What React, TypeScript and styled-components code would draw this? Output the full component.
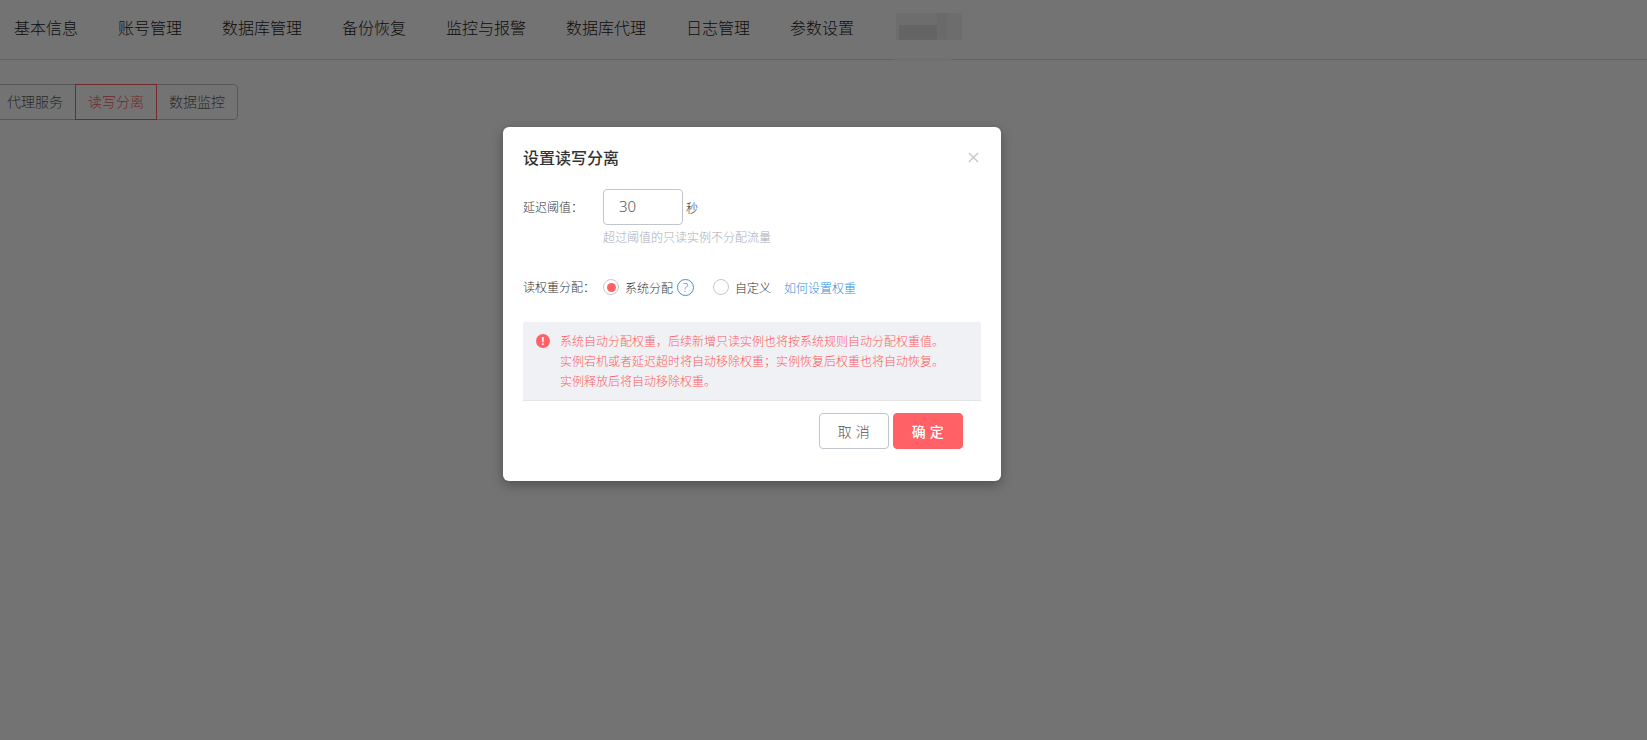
import React from 'react';
import styled, { createGlobalStyle } from 'styled-components';

const NAV_ITEMS = ['基本信息', '账号管理', '数据库管理', '备份恢复', '监控与报警', '数据库代理', '日志管理', '参数设置'];
const TABS = ['代理服务', '读写分离', '数据监控'];
const NOTICE = [
  '系统自动分配权重，后续新增只读实例也将按系统规则自动分配权重值。',
  '实例宕机或者延迟超时将自动移除权重；实例恢复后权重也将自动恢复。',
  '实例释放后将自动移除权重。',
];

const App: React.FC = () => (
  <Page>
    <GlobalStyle />
    <Nav>
      {NAV_ITEMS.map((item) => (
        <NavItem key={item}>{item}</NavItem>
      ))}
      <Mosaic />
    </Nav>
    <Tabs>
      {TABS.map((tab, i) => (
        <Tab key={tab} $active={i === 1}>
          {tab}
        </Tab>
      ))}
    </Tabs>
    <Overlay />
    <Modal>
      <ModalHeader>
        <ModalTitle>设置读写分离</ModalTitle>
        <CloseIcon viewBox="0 0 12 12">
          <path d="M1 1l10 10M11 1L1 11" />
        </CloseIcon>
      </ModalHeader>
      <FieldRow>
        <FieldLabel>延迟阈值：</FieldLabel>
        <DelayInput>30</DelayInput>
        <Unit>秒</Unit>
      </FieldRow>
      <Hint>超过阈值的只读实例不分配流量</Hint>
      <WeightRow>
        <FieldLabel>读权重分配：</FieldLabel>
        <Radio $checked />
        <RadioText>系统分配</RadioText>
        <HelpIcon>?</HelpIcon>
        <Radio />
        <RadioText>自定义</RadioText>
        <HelpLink>如何设置权重</HelpLink>
      </WeightRow>
      <Notice>
        <NoticeIcon>!</NoticeIcon>
        <NoticeText>
          {NOTICE.map((line) => (
            <div key={line}>{line}</div>
          ))}
        </NoticeText>
      </Notice>
      <Footer>
        <CancelButton>取 消</CancelButton>
        <ConfirmButton>确 定</ConfirmButton>
      </Footer>
    </Modal>
  </Page>
);

const GlobalStyle = createGlobalStyle`
  html, body {
    margin: 0;
    padding: 0;
    background: #fff;
  }
  * {
    box-sizing: border-box;
  }
`;

const Page = styled.div`
  position: relative;
  width: 1647px;
  height: 740px;
  overflow: hidden;
  background: #fff;
  font-family: "Noto Sans CJK SC", "Noto Sans", sans-serif;
  font-weight: 300;
`;

const Nav = styled.div`
  display: flex;
  align-items: center;
  gap: 40px;
  height: 60px;
  padding: 0 0 6px 14px;
  border-bottom: 1px solid #d9d9d9;
`;

const NavItem = styled.div`
  font-size: 16px;
  line-height: 24px;
  color: #1c1c1c;
`;

const Mosaic = styled.div`
  position: relative;
  width: 66px;
  height: 27px;
  margin-left: 2px;
  background:
    linear-gradient(90deg, #f1f1f1 0 62%, #ebebeb 62% 78%, #f2f2f2 78%) 0 0 / 100% 45% no-repeat,
    linear-gradient(90deg, #f1f1f1 0 4%, #dedede 4% 62%, #ececec 62% 78%, #f2f2f2 78%) 0 100% / 100% 55% no-repeat;
  filter: blur(0.6px);
  &::after {
    content: '';
    position: absolute;
    top: 45px;
    left: -2px;
    width: 57px;
    height: 3px;
    background: #f8f8f8;
  }
`;

const Tabs = styled.div`
  display: flex;
  width: max-content;
  height: 36px;
  margin: 24px 0 0 -5px;
`;

const Tab = styled.div<{ $active?: boolean }>`
  display: flex;
  align-items: center;
  justify-content: center;
  width: 82px;
  margin-left: -1px;
  padding-bottom: 2px;
  font-size: 14px;
  color: ${({ $active }) => ($active ? '#ff5a5f' : '#5a5a5a')};
  border: 1px solid ${({ $active }) => ($active ? '#ff5a5f' : '#c4c4c4')};
  position: ${({ $active }) => ($active ? 'relative' : 'static')};
  &:first-child {
    border-radius: 4px 0 0 4px;
  }
  &:last-child {
    border-radius: 0 4px 4px 0;
  }
`;

const Overlay = styled.div`
  position: absolute;
  inset: 0;
  background: rgba(0, 0, 0, 0.55);
`;

const Modal = styled.div`
  position: absolute;
  left: 503px;
  top: 127px;
  width: 498px;
  height: 354px;
  padding: 20px 20px 0;
  background: #fff;
  border-radius: 6px;
  box-shadow: 0 4px 12px rgba(0, 0, 0, 0.3);
`;

const ModalHeader = styled.div`
  display: flex;
  align-items: center;
  justify-content: space-between;
  height: 20px;
  padding-right: 2px;
`;

const ModalTitle = styled.div`
  font-size: 16px;
  font-weight: 500;
  color: #333;
`;

const CloseIcon = styled.svg`
  width: 11px;
  height: 11px;
  fill: none;
  stroke: #c8c8c8;
  stroke-width: 1.6;
`;

const FieldRow = styled.div`
  display: flex;
  align-items: center;
  margin-top: 22px;
  height: 36px;
`;

const FieldLabel = styled.div`
  width: 80px;
  margin-bottom: 1px;
  font-size: 12px;
  color: #333;
`;

const DelayInput = styled.div`
  display: flex;
  align-items: center;
  width: 80px;
  height: 36px;
  padding: 0 15px 2px;
  font-family: "Noto Sans", sans-serif;
  font-size: 15px;
  color: #555;
  border: 1px solid #c0c4cc;
  border-radius: 4px;
`;

const Unit = styled.div`
  margin-left: 3px;
  font-size: 12px;
  color: #333;
`;

const Hint = styled.div`
  margin: 2px 0 0 80px;
  font-size: 12px;
  line-height: 20px;
  color: #a8adb8;
`;

const WeightRow = styled.div`
  display: flex;
  align-items: center;
  height: 24px;
  margin-top: 28px;
`;

const Radio = styled.span<{ $checked?: boolean }>`
  position: relative;
  width: 16px;
  height: 16px;
  border-radius: 50%;
  border: 1px solid #c8c8c8;
  &::after {
    content: '';
    display: ${({ $checked }) => ($checked ? 'block' : 'none')};
    position: absolute;
    inset: 2.5px;
    border-radius: 50%;
    background: #ff6167;
  }
`;

const RadioText = styled.span`
  margin-left: 6px;
  font-size: 12px;
  color: #333;
`;

const HelpIcon = styled.span`
  display: flex;
  flex: none;
  align-items: center;
  justify-content: center;
  width: 17px;
  height: 17px;
  margin: 0 19px 0 4px;
  font-family: "Noto Sans", sans-serif;
  font-size: 13px;
  color: #2f96e6;
  border: 1px solid #2f96e6;
  border-radius: 50%;
`;

const HelpLink = styled.span`
  margin-left: 13px;
  font-size: 12px;
  color: #2f8fe0;
`;

const Notice = styled.div`
  display: flex;
  width: 458px;
  height: 79px;
  margin-top: 23px;
  padding: 9px 13px;
  background: #f0f1f5;
  border-bottom: 1px solid #e4e4e4;
  border-radius: 2px 2px 0 0;
`;

const NoticeIcon = styled.span`
  display: flex;
  flex: none;
  align-items: center;
  justify-content: center;
  width: 14px;
  height: 14px;
  margin: 3px 10px 0 0;
  font-family: "Noto Sans", sans-serif;
  font-size: 10px;
  font-weight: 700;
  color: #fff;
  background: #ff6167;
  border-radius: 50%;
`;

const NoticeText = styled.div`
  font-size: 12px;
  line-height: 20px;
  color: #ff5a5f;
`;

const Footer = styled.div`
  display: flex;
  justify-content: flex-end;
  gap: 4px;
  padding-right: 18px;
  margin-top: 12px;
`;

const CancelButton = styled.div`
  display: flex;
  align-items: center;
  justify-content: center;
  width: 70px;
  height: 36px;
  font-size: 14px;
  letter-spacing: 0.5px;
  color: #555;
  border: 1px solid #c0c4cc;
  border-radius: 4px;
`;

const ConfirmButton = styled(CancelButton)`
  color: #fff;
  font-weight: 500;
  background: #ff6167;
  border-color: #ff6167;
`;

export default App;
